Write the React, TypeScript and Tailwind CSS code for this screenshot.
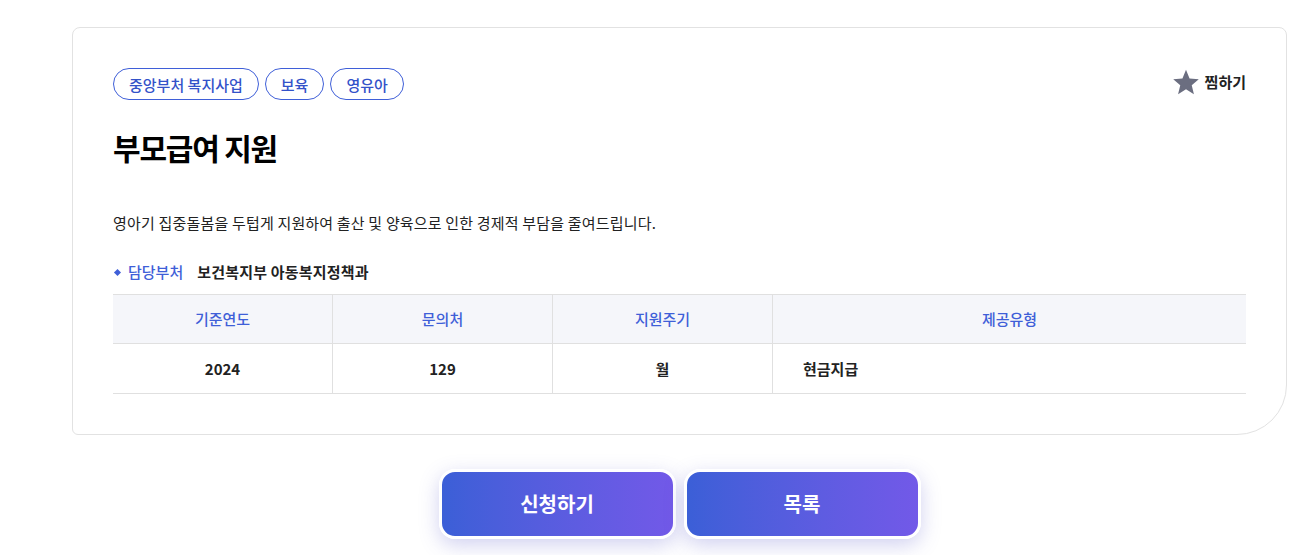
import React from "react";

const tags = ["중앙부처 복지사업", "보육", "영유아"];

const columns = [
  { label: "기준연도", value: "2024", width: "w-[220px]", align: "text-center" },
  { label: "문의처", value: "129", width: "w-[220px]", align: "text-center" },
  { label: "지원주기", value: "월", width: "w-[220px]", align: "text-center" },
  { label: "제공유형", value: "현금지급", width: "flex-1", align: "text-left pl-[30px]" },
];

function StarIcon() {
  return (
    <svg width="28" height="28" viewBox="0 0 24 24" className="text-[#6b6e80]">
      <path
        fill="currentColor"
        d="M12 1.6l3.05 7.35 7.9.6-6.03 5.15 1.87 7.7L12 18.2l-6.79 4.2 1.87-7.7L1.05 9.55l7.9-.6z"
      />
    </svg>
  );
}

export default function App() {
  return (
    <div className="min-h-[555px] bg-white font-['Noto_Sans_CJK_KR','Noto_Sans',sans-serif] text-[#222]">
      <div className="pt-[27px] pl-[72px] pr-[20px]">
        <div className="border border-[#e2e2e2] rounded-tl-[8px] rounded-tr-[8px] rounded-bl-[6px] rounded-br-[50px] px-[40px] pt-[40px] pb-[40px] bg-white">
          <div className="flex items-start justify-between">
            <div className="flex gap-[6px]">
              {tags.map((t) => (
                <span
                  key={t}
                  className="h-[32px] flex items-center px-[15px] rounded-full border border-[#3f5fd8] text-[#3352c9] text-[15px] font-medium leading-none"
                >
                  {t}
                </span>
              ))}
            </div>
            <button className="flex items-center gap-[5px] text-[15px] font-bold text-[#222]">
              <StarIcon />
              찜하기
            </button>
          </div>

          <h1 className="mt-[27px] text-[30px] font-bold leading-[40px] tracking-[-1.2px] text-black">부모급여 지원</h1>

          <p className="mt-[44px] text-[15px] leading-[24px] tracking-[0.18px] text-[#222]">
            영아기 집중돌봄을 두텁게 지원하여 출산 및 양육으로 인한 경제적 부담을 줄여드립니다.
          </p>

          <div className="mt-[25px] flex items-center text-[15px] leading-[24px] font-bold">
            <span className="w-[5px] h-[5px] rotate-45 bg-[#3f5fd8] ml-[2px] mr-[8px]" />
            <span className="text-[#3f5fd8] font-medium">담당부처</span>
            <span className="ml-[14px] tracking-[0.2px] text-[#222]">보건복지부 아동복지정책과</span>
          </div>

          <div className="mt-[10px] border-t border-b border-[#e0e0e0]">
            <div className="flex bg-[#f5f6fa] border-b border-[#e0e0e0]">
              {columns.map((c, i) => (
                <div
                  key={c.label}
                  className={`${c.width} h-[48px] flex items-center justify-center text-[15px] font-medium text-[#3f5fd8] ${i < 3 ? "border-r border-[#e0e0e0]" : ""}`}
                >
                  {c.label}
                </div>
              ))}
            </div>
            <div className="flex">
              {columns.map((c, i) => (
                <div
                  key={c.label}
                  className={`${c.width} ${c.align} h-[49px] leading-[49px] text-[15px] font-bold text-[#222] ${i < 3 ? "border-r border-[#e0e0e0]" : ""}`}
                >
                  {c.value}
                </div>
              ))}
            </div>
          </div>
        </div>

        <div className="mt-[34px] flex justify-center gap-[8px]">
          {["신청하기", "목록"].map((b) => (
            <button
              key={b}
              className="w-[237px] h-[70px] rounded-[16px] border-[3px] border-white bg-gradient-to-r from-[#3b5fd7] to-[#7259e8] text-white text-[20px] font-bold shadow-[0_6px_20px_rgba(90,90,200,0.28)]"
            >
              {b}
            </button>
          ))}
        </div>
      </div>
    </div>
  );
}
